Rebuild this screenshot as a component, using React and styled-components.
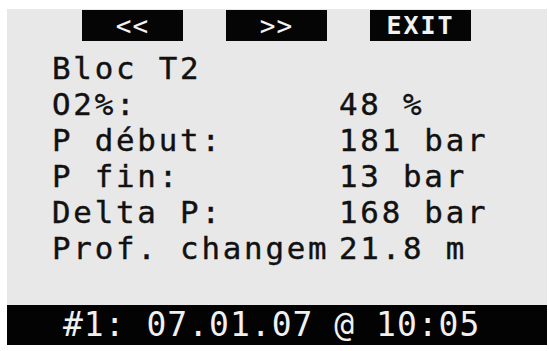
import React from 'react';
import styled, { createGlobalStyle } from 'styled-components';

const GlobalStyle = createGlobalStyle`
  html, body {
    margin: 0;
    padding: 0;
    background: #ffffff;
  }
`;

const Page = styled.div`
  width: 549px;
  height: 351px;
  padding: 9px 2px 6px 7px;
  box-sizing: border-box;
  background: #ffffff;
`;

const Screen = styled.div`
  height: 100%;
  background: #e8e8e8;
  display: flex;
  flex-direction: column;
  font-family: "DejaVu Sans Mono", monospace;
  color: #111111;
`;

const SoftKeys = styled.div`
  display: flex;
  gap: 43px;
  padding: 1px 0 0 75px;
`;

const SoftKey = styled.div`
  width: 101px;
  height: 31px;
  background: #050505;
  color: #f2f2f2;
  display: flex;
  align-items: center;
  justify-content: center;
  font-size: ${(p) => (p.$wide ? '25px' : '26px')};
  font-weight: ${(p) => (p.$wide ? 'bold' : 'normal')};
  letter-spacing: ${(p) => (p.$wide ? '2px' : '1px')};
`;

const Rows = styled.div`
  display: flex;
  flex-direction: column;
  padding: 9px 0 0 45px;
  flex: 1;
`;

const Row = styled.div`
  display: grid;
  grid-template-columns: 287px 1fr;
  height: 36px;
  line-height: 36px;
  font-size: 30.8px;
  letter-spacing: 2.8px;
  white-space: nowrap;
  -webkit-text-stroke: 0.4px #111111;
`;

const Footer = styled.div`
  height: 40px;
  background: #030303;
  color: #f0f0f0;
  font-size: 33px;
  line-height: 40px;
  letter-spacing: 1px;
  padding-left: 56px;
  white-space: nowrap;
`;

const rows = [
  ['Bloc T2', ''],
  ['O2%:', '48 %'],
  ['P début:', '181 bar'],
  ['P fin:', '13 bar'],
  ['Delta P:', '168 bar'],
  ['Prof. changem', '21.8 m'],
];

export default function App() {
  return (
    <Page>
      <GlobalStyle />
      <Screen>
        <SoftKeys>
          <SoftKey>&lt;&lt;</SoftKey>
          <SoftKey>&gt;&gt;</SoftKey>
          <SoftKey $wide>EXIT</SoftKey>
        </SoftKeys>
        <Rows>
          {rows.map(([label, value]) => (
            <Row key={label}>
              <span>{label}</span>
              <span>{value}</span>
            </Row>
          ))}
        </Rows>
        <Footer>#1: 07.01.07 @ 10:05</Footer>
      </Screen>
    </Page>
  );
}
